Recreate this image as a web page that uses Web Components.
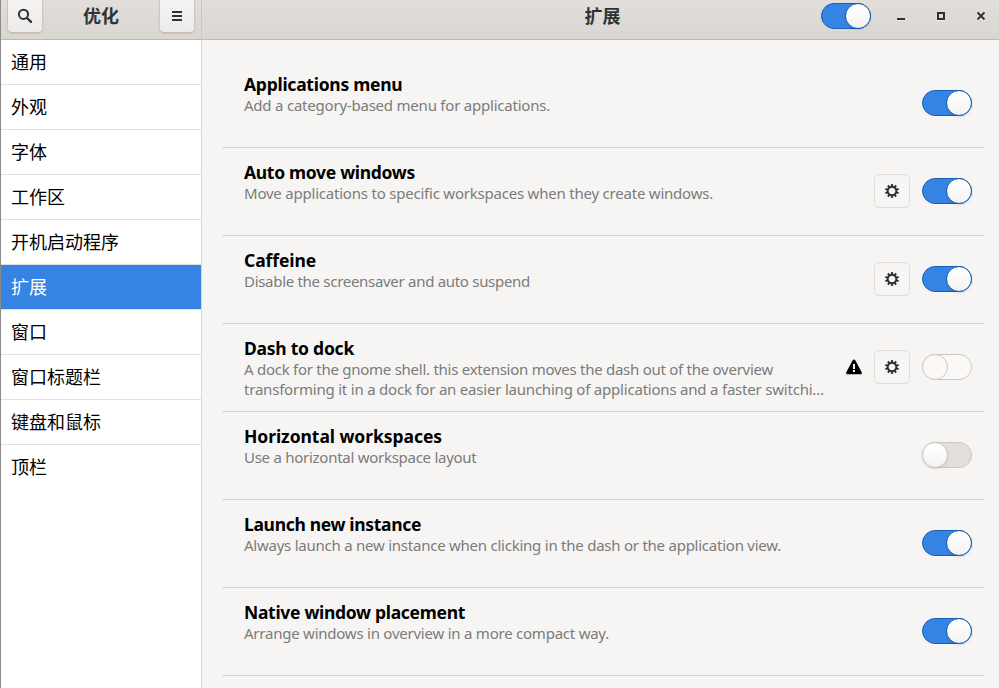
<!DOCTYPE html>
<html lang="zh-CN">
<head>
<meta charset="utf-8">
<title>优化</title>
<style>
html,body{margin:0;height:100%;overflow:hidden}
body{font-family:"Noto Sans","Noto Sans CJK SC",sans-serif;background:#f6f5f4;color:#000}
</style>
</head>
<body>
<tweaks-window></tweaks-window>
<script>
const define = (name, markup, ready) => {
  const tpl = document.createElement('template');
  tpl.innerHTML = markup;
  customElements.define(name, class extends HTMLElement {
    constructor() {
      super();
      this.attachShadow({mode: 'open'}).append(tpl.content.cloneNode(true));
    }
    connectedCallback() { if (ready) ready(this, this.shadowRoot); }
  });
};

define('toggle-switch', `<style>
:host{display:block;box-sizing:border-box;width:50px;height:26px;flex:none;border:1px solid #cdc7c2;border-radius:13px;background:#e1dedb}
i{display:block;box-sizing:border-box;width:26px;height:26px;margin:-1px;border:1px solid #cdc7c2;border-radius:50%;background:linear-gradient(#fff 20%,#f3f2f1);box-shadow:0 1px 2px rgba(0,0,0,.12)}
:host([on]){background:#3584e4;border-color:#185fb4}
:host([on]) i{margin-left:23px;border-color:#185fb4}
:host([disabled]){background:#faf9f8}
:host([disabled]) i{background:#faf9f8;box-shadow:none}
</style><i></i>`);

define('gear-button', `<style>
:host{display:flex;box-sizing:border-box;width:36px;height:34px;flex:none;align-items:center;justify-content:center;border:1px solid #dfdcd9;border-radius:5px}
</style>
<svg width="16" height="16" viewBox="-8 -8 16 16"><circle r="4.4" fill="none" stroke="#2e3436" stroke-width="2.1"/><g id="g" stroke="#2e3436" stroke-width="1.9"></g></svg>`,
(el, root) => {
  const g = root.getElementById('g');
  if (g.childNodes.length) return;
  for (let a = 0; a < 360; a += 36) {
    const l = document.createElementNS('http://www.w3.org/2000/svg', 'path');
    l.setAttribute('d', 'M0-4.6V-7');
    l.setAttribute('transform', `rotate(${a})`);
    g.append(l);
  }
});

define('header-button', `<style>
:host{display:flex;box-sizing:border-box;width:36px;height:37px;flex:none;align-items:center;justify-content:center;padding-top:3px;border:1px solid #cdc7c2;border-bottom-color:#bfb8b1;border-radius:5px;background:linear-gradient(#f6f5f4,#edebe9);box-shadow:0 1px 2px rgba(0,0,0,.08)}
</style><slot></slot>`);

/* Spreads a run of text over an exact advance width. */
define('fit-text', `<style>:host{display:block;white-space:nowrap}span{display:inline-block}</style><span><slot></slot></span>`,
(el, root) => {
  const s = root.querySelector('span');
  const gap = (Number(el.getAttribute('width')) - s.getBoundingClientRect().width) / el.textContent.length;
  s.style.letterSpacing = gap.toFixed(3) + 'px';
});

define('side-item', `<style>
:host{display:flex;align-items:center;box-sizing:border-box;height:45px;padding:0 10px 2px;border-bottom:1px solid #e1e1e1;font:18px/26px "Noto Sans CJK SC",sans-serif}
:host(:last-of-type){border-bottom-color:transparent}
:host([selected]){background:#3584e4;color:#fff}
</style><slot></slot>`);

define('extension-row', `<style>
:host{display:flex;align-items:center;box-sizing:border-box;height:88px;padding:0 12px 0 22px;border-bottom:1px solid #dad8d6}
.text{flex:1;align-self:flex-start;padding-top:13px;color:#7b7b7a;font-size:15px;line-height:20px}
.title{color:#000;font-size:17.5px;font-weight:700;line-height:23px;margin-bottom:-1px}
.side{display:flex;align-items:center;gap:12px;padding-bottom:1px}
</style><div class="text"><div class="title"><slot name="title"></slot></div><slot></slot></div><div class="side"><slot name="side"></slot></div>`);

const rows = [
  ['Applications menu', 158.5, [['Add a category-based menu for applications.', 306]], 'on'],
  ['Auto move windows', 171, [['Move applications to specific workspaces when they create windows.', 469]], 'on', 1],
  ['Caffeine', 72, [['Disable the screensaver and auto suspend', 286]], 'on', 1],
  ['Dash to dock', 110, [['A dock for the gnome shell. this extension moves the dash out of the overview', 529], ['transforming it in a dock for an easier launching of applications and a faster switchi…', 580]], 'disabled', 1, 1],
  ['Horizontal workspaces', 198, [['Use a horizontal workspace layout', 232.5]], ''],
  ['Launch new instance', 177, [['Always launch a new instance when clicking in the dash or the application view.', 537]], 'on'],
  ['Native window placement', 221, [['Arrange windows in overview in a more compact way.', 365]], 'on'],
];
const warning = '<svg slot="side" width="16" height="16" viewBox="0 0 16 16"><path d="M8 .5c.7 0 1.1.4 1.4.9l6.2 11.7c.6 1.2 0 2.2-1.2 2.2H1.6C.4 15.300-.2 14.300.4 13.100L6.600 1.400C6.900.9 7.300.5 8 .5Z"/><path d="M7 5h2v5H7zM7 11h2v2H7z" fill="#f6f5f4"/></svg>';

define('tweaks-window', `<style>
:host{display:grid;box-sizing:border-box;height:688px;grid-template:40px 1fr / 201px 1fr;border-left:1px solid #8d8b89}
header{display:flex;align-items:flex-start;box-sizing:border-box;border-bottom:1px solid #bfb8b1;background:linear-gradient(#e1dedb,#dad6d2);color:#2e3436;font:700 18px/26px "Noto Sans CJK SC",sans-serif}
.left{justify-content:space-between;padding:0 6px;border-right:1px solid #cbc6c1}
.left header-button{margin-top:-4px}
h1{margin:2px 0 0;font:inherit}
.right{display:grid;grid-template-columns:1fr auto 1fr;padding-left:4px}
.controls{display:flex;justify-content:flex-end;align-items:center;padding:3px 10px 0 0;gap:24px}
.controls toggle-switch{margin-right:-2px}
.controls svg{display:block}
nav{background:#fff;border-right:1px solid #d8d6d3}
main{padding:20px 15px 0 20px;overflow:hidden}
</style>
<header class="left">
<header-button><svg width="16" height="16" viewBox="0 0 16 16" fill="none" stroke="#2e3436"><circle cx="6.500" cy="6.300" r="4.600" stroke-width="2"/><path d="M10 10l4 3.900" stroke-width="2.400" stroke-linecap="round"/></svg></header-button>
<h1>优化</h1>
<header-button><svg width="16" height="16" viewBox="0 0 16 16" fill="#2e3436"><path d="M3 3h10v2H3zM3 7h10v2H3zM3 11h10v2H3z"/></svg></header-button>
</header>
<header class="right"><span></span><h1>扩展</h1>
<div class="controls"><toggle-switch on></toggle-switch>
<svg width="16" height="16" viewBox="0 0 16 16"><path d="M4 10h8v2H4z" fill="#2e3436"/><path d="M4 12h8v1H4z" fill="#f2f0ee"/></svg>
<svg width="16" height="16" viewBox="0 0 16 16"><path d="M4 12h8v1H4z" fill="#f2f0ee"/><path d="M5 5h6v6H5z" fill="none" stroke="#2e3436" stroke-width="2"/></svg>
<svg width="16" height="16" viewBox="0 0 16 16" fill="none" stroke-width="2"><path d="M4.500 5.500l7 7M11.500 5.500l-7 7" stroke="#f2f0ee"/><path d="M4.500 4.500l7 7M11.500 4.500l-7 7" stroke="#2e3436"/></svg>
</div></header>
<nav></nav><main></main>`, (el, root) => {
  root.querySelector('nav').innerHTML = ['通用','外观','字体','工作区','开机启动程序','扩展','窗口','窗口标题栏','键盘和鼠标','顶栏']
    .map(t => `<side-item${t === '扩展' ? ' selected' : ''}>${t}</side-item>`).join('');
  root.querySelector('main').innerHTML = rows.map(([title, w, lines, state, gear, warn]) => `<extension-row><fit-text slot="title" width="${w}">${title}</fit-text>${
    lines.map(([t, n]) => `<fit-text width="${n}">${t}</fit-text>`).join('')}${warn ? warning : ''}${
    gear ? '<gear-button slot="side"></gear-button>' : ''}<toggle-switch slot="side" ${state}></toggle-switch></extension-row>`).join('');
});
</script>
</body>
</html>
